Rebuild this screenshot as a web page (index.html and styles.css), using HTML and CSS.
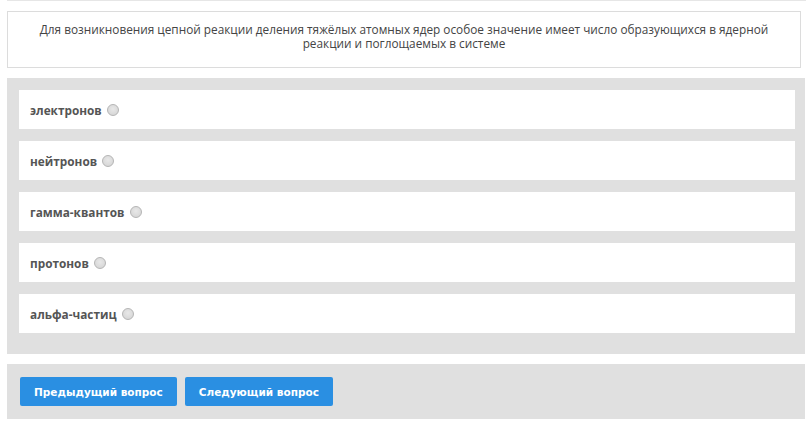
FILE: index.html
```html
<!DOCTYPE html>
<html lang="ru">
<head>
<meta charset="utf-8">
<link rel="stylesheet" href="styles.css">
</head>
<body>
<div class="topline"></div>
<div class="page">
  <div class="question">
    Для возникновения цепной реакции деления тяжёлых атомных ядер особое значение имеет число образующихся в ядерной реакции и поглощаемых в системе
  </div>
  <div class="answers">
    <label class="option">электронов <span class="radio"></span></label>
    <label class="option">нейтронов <span class="radio"></span></label>
    <label class="option">гамма-квантов <span class="radio"></span></label>
    <label class="option">протонов <span class="radio"></span></label>
    <label class="option">альфа-частиц <span class="radio"></span></label>
  </div>
  <div class="nav">
    <button class="btn">Предыдущий вопрос</button>
    <button class="btn">Следующий вопрос</button>
  </div>
</div>
</body>
</html>
```
FILE: styles.css
```css
html, body {
  margin: 0;
  padding: 0;
  background: #fff;
}
body {
  font-family: "Open Sans", "DejaVu Sans", sans-serif;
  color: #444;
}
.topline {
  height: 1px;
  background: #e6e6e6;
  margin: 0 3px 0 7px;
}
.page {
  width: 798px;
  margin-left: 7px;
  padding-top: 10px;
}
.question {
  width: 794px;
  border: 1px solid #dcdcdc;
  box-sizing: border-box;
  height: 57px;
  padding: 10px 20px 0;
  font-size: 11.8px;
  line-height: 14px;
  text-align: center;
  color: #444;
}
.answers {
  margin-top: 10px;
  background: #e0e0e0;
  padding: 12px 10px 9px 12px;
  display: flex;
  flex-direction: column;
}
.option {
  background: #fff;
  height: 39px;
  margin-bottom: 12px;
  display: flex;
  align-items: center;
  padding-left: 11px;
  font-size: 11.8px;
  font-weight: bold;
  color: #555;
}
.radio {
  display: inline-block;
  width: 10px;
  height: 10px;
  border-radius: 50%;
  border: 1px solid #b5b5b5;
  background: radial-gradient(circle at 50% 40%, #e8e8e8, #d2d2d2);
  margin-left: 5px;
}
.nav {
  margin-top: 10px;
  background: #e0e0e0;
  height: 55px;
  display: flex;
  align-items: center;
  padding-left: 13px;
  gap: 8px;
}
.btn {
  background: #2a8fe2;
  color: #fff;
  border: none;
  border-radius: 2px;
  height: 29px;
  padding: 0 14px;
  font-family: "DejaVu Sans", sans-serif;
  font-weight: bold;
  font-size: 10.5px;
  cursor: pointer;
}
```
